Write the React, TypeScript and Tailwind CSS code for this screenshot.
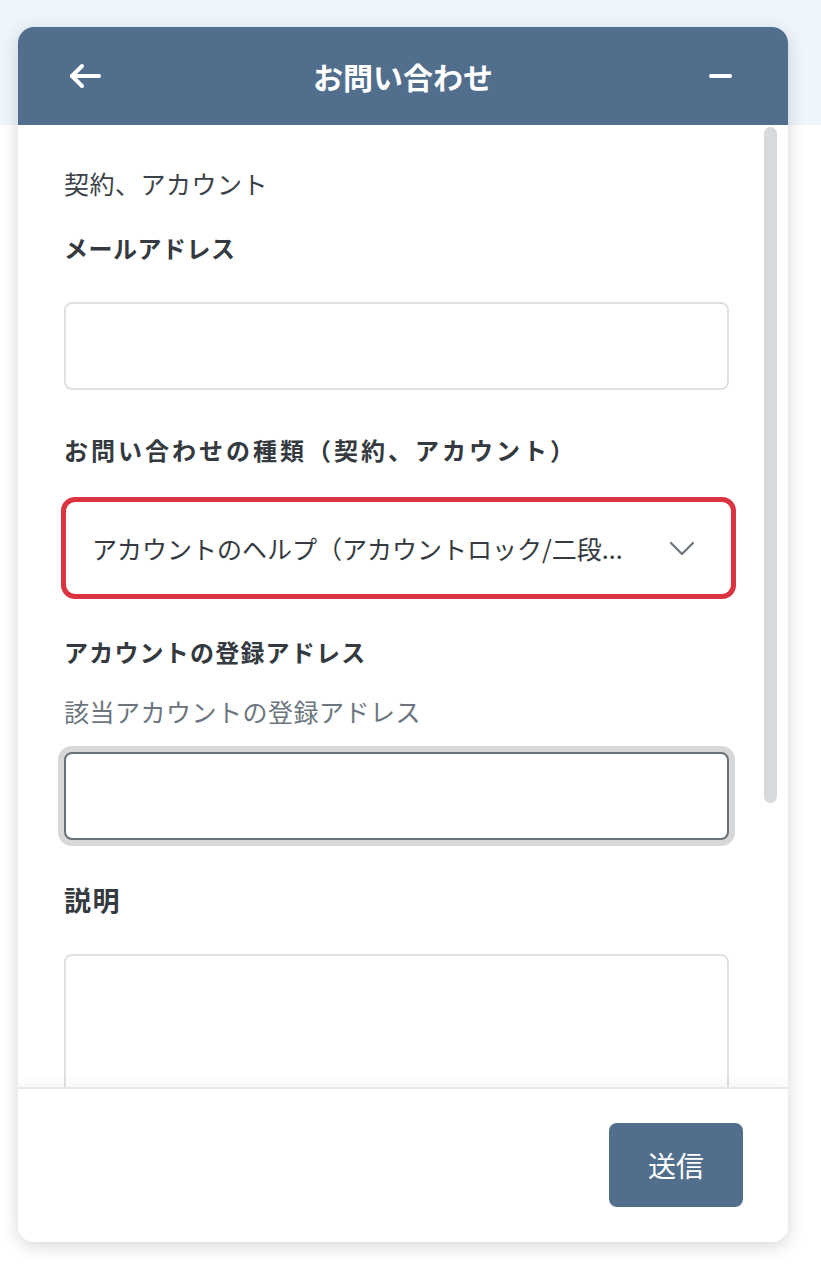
export default function App() {
  return (
    <div className="relative w-[821px] min-h-[1267px] bg-white font-['Noto_Sans_CJK_JP','Noto_Sans',sans-serif] text-[#343a40]">
      <div className="absolute inset-x-0 top-0 h-[125px] bg-[#eef5fd]" />
      <div className="relative pt-[27px] pl-[18px]">
        <div className="flex h-[1215px] w-[770px] flex-col overflow-hidden rounded-[16px] bg-white shadow-[0_4px_18px_rgba(0,0,0,0.16)]">
          {/* Header */}
          <div className="flex h-[98px] shrink-0 items-center bg-[#516e8c] px-[50px]">
            <div className="flex w-[40px] items-center">
              <svg width="34" height="26" viewBox="0 0 34 26" fill="none" stroke="white" strokeWidth="4" strokeLinecap="round" strokeLinejoin="round">
                <path d="M4 13H31" />
                <path d="M14 3L4 13L14 23" />
              </svg>
            </div>
            <div className="flex-1 text-center text-[30px] font-bold leading-none text-white">お問い合わせ</div>
            <div className="flex w-[40px] justify-end pr-[6px]">
              <div className="h-[4px] w-[23px] rounded-full bg-white" />
            </div>
          </div>

          {/* Body */}
          <div className="flex min-h-0 flex-1 overflow-hidden">
            <div className="flex-1 pl-[46px] pr-[31px] pt-[40px]">
              <div className="text-[25px] leading-[36px] tracking-[0.5px] text-[#3b4148]">契約、アカウント</div>

              <div className="mt-[29px] text-[24px] font-bold leading-[36px] tracking-[0.5px]">メールアドレス</div>
              <div className="mt-[36px] h-[88px] rounded-[8px] border-2 border-[#dee1e4] bg-white" />

              <div className="mt-[42px] text-[24px] font-bold leading-[36px] tracking-[3px]">お問い合わせの種類（契約、アカウント）</div>
              <div className="-ml-[3px] -mr-[7px] mt-[29px] flex h-[102px] items-center rounded-[14px] border-[5px] border-[#dc3340] bg-white pl-[26px] pr-[36px]">
                <div className="whitespace-nowrap text-[25px] leading-[36px] text-[#343a40]">
                  アカウントのヘルプ（アカウントロック/二段...
                </div>
                <div className="flex flex-1 justify-end">
                  <svg width="26" height="15" viewBox="0 0 26 15" fill="none" stroke="#6c757d" strokeWidth="2.2" strokeLinecap="round" strokeLinejoin="round">
                    <path d="M2 2L13 13L24 2" />
                  </svg>
                </div>
              </div>

              <div className="mt-[35px] text-[24px] font-bold leading-[36px] tracking-[1.2px]">アカウントの登録アドレス</div>
              <div className="mt-[23px] text-[25px] leading-[36px] tracking-[0.5px] text-[#6c757d]">該当アカウントの登録アドレス</div>
              <div className="mt-[23px] h-[88px] rounded-[8px] border-2 border-[#687078] bg-white shadow-[0_0_0_6px_#d6d7d8]" />

              <div className="mt-[42px] text-[27px] font-bold leading-[36px] tracking-[1.5px]">説明</div>
              <div className="mt-[36px] h-[200px] rounded-[8px] border-2 border-[#dee1e4] bg-white" />
            </div>
            <div className="w-[28px] shrink-0 pl-[4px] pt-[2px]">
              <div className="h-[676px] w-[13px] rounded-full bg-[#d6dadd]" />
            </div>
          </div>

          {/* Footer */}
          <div className="flex h-[155px] shrink-0 items-start justify-end border-t-2 border-[#e7e8e9] bg-white pr-[45px] pt-[34px] shadow-[0_-6px_10px_rgba(0,0,0,0.03)]">
            <button className="flex h-[84px] w-[134px] items-center justify-center rounded-[8px] bg-[#516e8c] text-[28px] leading-none text-white">
              送信
            </button>
          </div>
        </div>
      </div>
    </div>
  );
}
